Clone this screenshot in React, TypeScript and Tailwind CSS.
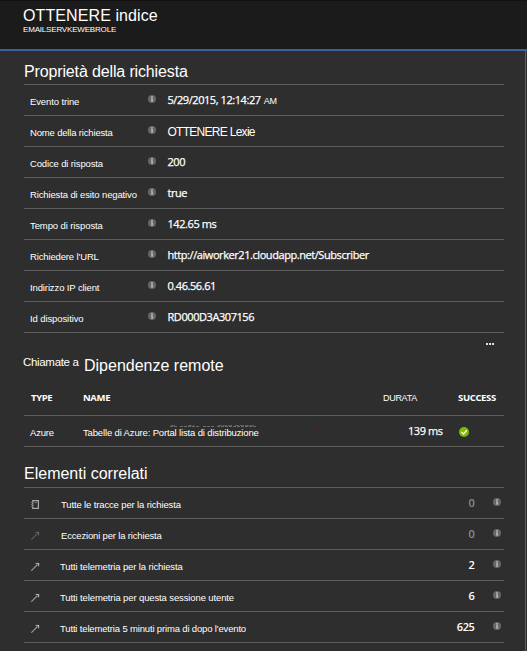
import type { ReactNode } from "react";

const arial = "font-['Liberation_Sans',Arial,sans-serif]";
const segoe = "font-['Open_Sans','Noto_Sans',sans-serif]";

function Info() {
  return (
    <svg className="block size-[8px] shrink-0" viewBox="0 0 8 8">
      <circle cx="4" cy="4" r="4" fill="#666666" />
      <rect x="3.2" y="1.2" width="1.6" height="1.4" fill="#c4c4c4" />
      <path d="M3 3.2h1.8v2.6h.5v.8H2.9v-.8h.5V4H3z" fill="#c4c4c4" />
    </svg>
  );
}

function Property({ label, labelClass, children }: { label: string; labelClass: string; children: ReactNode }) {
  return (
    <div className="flex h-[31px] items-start border-b border-[#5c5c5c] pl-[6px]">
      <div className={`w-[118px] shrink-0 whitespace-nowrap pt-[10px] text-[9.5px] leading-[14px] ${labelClass}`}>{label}</div>
      <div className="w-[19.5px] shrink-0 pt-[10px]">
        <Info />
      </div>
      <div className={`flex items-baseline whitespace-nowrap pt-[7px] text-[11px] leading-[16px] tracking-[-0.43px] [-webkit-text-stroke:0.25px] ${segoe}`}>{children}</div>
    </div>
  );
}

function Arrow({ color }: { color: string }) {
  return (
    <svg className="block h-[9px] w-[9px]" viewBox="0 0 9 9" fill="none" stroke={color}>
      <path d="M.3 8.7 6.5 2.5" strokeWidth="1.1" opacity=".8" />
      <path d="M4.6 1.4h3V4.4" strokeWidth=".9" />
      <path d="M5.8 1h2.3v2.4z" fill={color} stroke="none" />
    </svg>
  );
}

function Notebook() {
  return (
    <svg className="block h-[10px] w-[9px]" viewBox="0 0 9 10" fill="none" stroke="#a8a8a8">
      <path d="M1.7.6h5.7v7.8H1.7z" strokeWidth="1.2" />
      <path d="M0 2.5h2M0 4.5h2M0 6.5h2M3.5 2.5h2.5" stroke="#777777" />
    </svg>
  );
}

function Related({ icon, label, labelClass, count, muted }: { icon: ReactNode; label: string; labelClass: string; count: string; muted?: boolean }) {
  return (
    <div className="flex h-[31px] items-start border-b border-[#5c5c5c] pl-[7px]">
      <div className="w-[29px] shrink-0 pt-[12px]">{icon}</div>
      <div className={`grow whitespace-nowrap pt-[10px] text-[9.5px] leading-[14px] ${labelClass}`}>{label}</div>
      <div className={`pt-[7px] text-[11px] leading-[16px] font-semibold tracking-[-0.4px] ${segoe} ${muted ? "text-[#8c8c8c]" : "text-white"}`}>{count}</div>
      <div className="pt-[10px] pr-[3px] pl-[18.5px]">
        <Info />
      </div>
    </div>
  );
}

export default function App() {
  return (
    <div className={`h-[651px] w-[527px] overflow-hidden bg-[#2e2e2e] text-white ${arial}`}>
      <header className="h-[51px] border-t border-b-2 border-t-[#111111] border-b-[#3f619b] bg-[#1b1b1b] pl-[23px]">
        <h1 className="pt-[6px] text-[16px] leading-[18px] tracking-[0.1px] whitespace-nowrap">OTTENERE indice</h1>
        <p className="text-[8px] leading-[9px] tracking-[-0.18px] whitespace-nowrap">EMAILSERVKEWEBROLE</p>
      </header>
      <main className="mr-px h-[600px] border-r border-[#3f619b] pr-[21px] pl-[24px]">
        <h2 className="h-[34px] border-b border-[#5c5c5c] pt-[11px] text-[16px] leading-[20px] tracking-[-0.14px] whitespace-nowrap">Proprietà della richiesta</h2>
        <Property label="Evento trine" labelClass="tracking-[-0.12px]">
          5/29/2015, 12:14:27<span className={`ml-[3px] text-[9px] tracking-[-0.2px] [-webkit-text-stroke:0] ${arial}`}>AM</span>
        </Property>
        <Property label="Nome della richiesta" labelClass="tracking-[-0.17px]">
          <span className={`pt-px text-[12px] tracking-[-0.72px] [-webkit-text-stroke:0] ${arial}`}>OTTENERE Lexie</span>
        </Property>
        <Property label="Codice di risposta" labelClass="tracking-[-0.14px]">200</Property>
        <Property label="Richiesta di esito negativo" labelClass="tracking-[-0.13px]">true</Property>
        <Property label="Tempo di risposta" labelClass="tracking-[-0.1px]">142.65 ms</Property>
        <Property label="Richiedere l'URL" labelClass="tracking-[-0.14px]">http://aiworker21.cloudapp.net/Subscriber</Property>
        <Property label="Indirizzo IP client" labelClass="tracking-[-0.12px]">0.46.56.61</Property>
        <Property label="Id dispositivo" labelClass="tracking-[-0.1px]">RD000D3A307156</Property>
        <div className="flex h-[21px] justify-end gap-px pt-[10px] pr-[10px]">
          <i className="size-[2px] bg-[#e0e0e0]" />
          <i className="size-[2px] bg-[#e0e0e0]" />
          <i className="size-[2px] bg-[#e0e0e0]" />
        </div>
        <h2 className="-ml-px flex h-[29px] items-start whitespace-nowrap">
          <span className="w-[61px] text-[11.5px] leading-[16px] tracking-[-0.32px]">Chiamate a</span>
          <span className="pt-[2px] text-[16px] leading-[20px]">Dipendenze remote</span>
        </h2>
        <div className={`flex h-[33px] items-start border-b border-[#5c5c5c] pt-[7px] pl-[7px] text-[9.5px] leading-[16px] font-bold tracking-[-0.35px] ${segoe}`}>
          <span className="w-[52px]">TYPE</span>
          <span className="w-[300px]">NAME</span>
          <span className={`w-[75px] text-[9px] font-normal tracking-[-0.3px] ${arial}`}>DURATA</span>
          <span>SUCCESS</span>
        </div>
        <div className="flex h-[31px] items-start border-b border-[#5c5c5c] pl-[6px]">
          <span className="w-[53px] pt-[10px] text-[9.5px] leading-[14px] tracking-[-0.18px]">Azure</span>
          <span className="relative w-[325px] pt-[10px] text-[9.5px] leading-[14px] tracking-[-0.15px] whitespace-nowrap">
            Tabelle di Azure: Portal lista di distribuzione
            <svg className="absolute top-[8px] left-[87px] h-[4px] w-[88px]" viewBox="0 0 88 4">
              <path d="M1 1.5h5M18 1.5h6M48 1.5h14M65 1.5h20" stroke="#5c5c5c" strokeDasharray="4 1" />
              <path d="M0 2.5h8M10 2.5h20M33 2.5h12M47 2.5h39" stroke="#6c6c6c" strokeDasharray="3 1" />
            </svg>
            <i className="absolute top-[14px] left-[233px] h-[6px] w-px border-y border-[#6a2525]" />
          </span>
          <span className={`w-[51px] pt-[7px] text-[11px] leading-[16px] tracking-[-0.43px] whitespace-nowrap [-webkit-text-stroke:0.25px] ${segoe}`}>139 ms</span>
          <svg className="mt-[11px] block size-[10px]" viewBox="0 0 10 10">
            <circle cx="5" cy="5" r="5" fill="#7fba00" />
            <path d="m2.5 5 2 2 3.3-3.7" fill="none" stroke="white" strokeWidth="1.3" />
          </svg>
        </div>
        <h2 className="h-[41px] border-b border-[#5c5c5c] pt-[17px] text-[16px] leading-[20px] whitespace-nowrap">Elementi correlati</h2>
        <Related icon={<Notebook />} label="Tutte le tracce per la richiesta" labelClass="pl-px tracking-[-0.14px]" count="0" muted />
        <Related icon={<Arrow color="#686868" />} label="Eccezioni per la richiesta" labelClass="pl-px tracking-[-0.17px]" count="0" muted />
        <Related icon={<Arrow color="#b5b5b5" />} label="Tutti telemetria per la richiesta" labelClass="tracking-[-0.13px]" count="2" />
        <Related icon={<Arrow color="#b5b5b5" />} label="Tutti telemetria per questa sessione utente" labelClass="tracking-[-0.12px]" count="6" />
        <Related icon={<Arrow color="#b5b5b5" />} label="Tutti telemetria 5 minuti prima di dopo l'evento" labelClass="tracking-[-0.16px]" count="625" />
      </main>
    </div>
  );
}
